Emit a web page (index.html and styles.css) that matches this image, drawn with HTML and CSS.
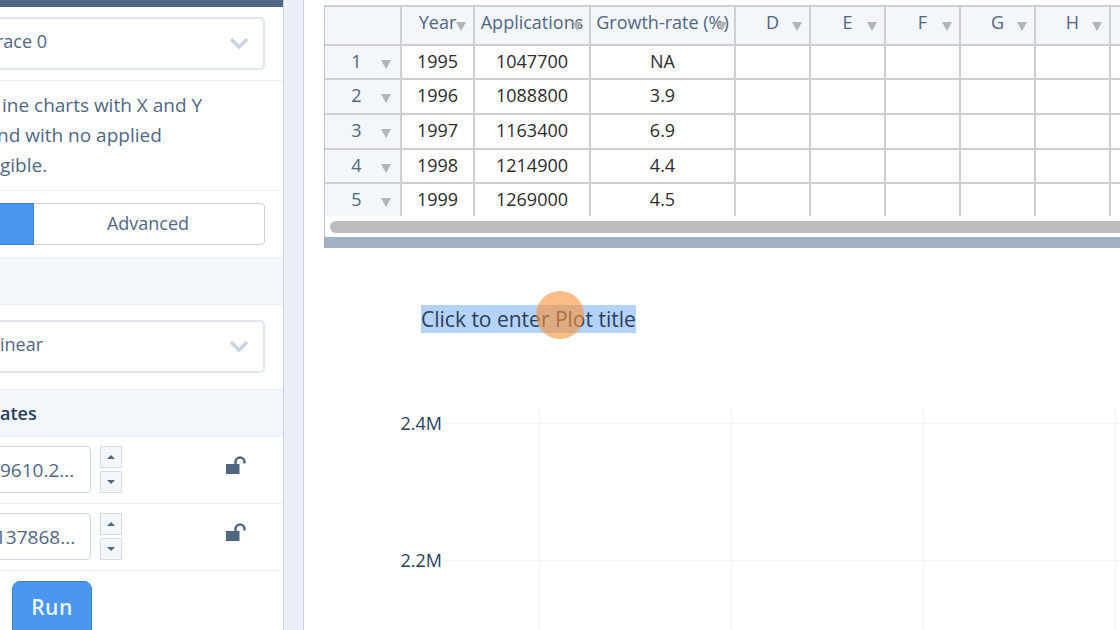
FILE: index.html
```html
<!DOCTYPE html>
<html lang="en">
<head>
  <meta charset="UTF-8" />
  <title>Chart Studio</title>
  <link rel="stylesheet" href="styles.css">
</head>
<body>
<div class="app">
  <aside class="sidebar">
    <div class="topbar"></div>

    <div class="section select-top">
      <div class="dropdown"><span class="dd-text">race 0</span> <svg class="chev" width="20" height="12" viewBox="0 0 20 12"><path d="M2 2l8 8 8-8" /></svg></div>
    </div>

    <div class="section note">
      <div class="note-first">ine charts with X and Y</div>
      <div class="note-second">nd with no applied</div>
      <div>gible.</div>
    </div>

    <div class="section toggle-wrap">
      <div class="toggle">
        <div class="toggle-on"></div>
        <div class="toggle-off">Advanced</div>
      </div>
    </div>

    <div class="band band-empty"></div>

    <div class="section select-mid">
      <div class="dropdown"><span class="dd-text">inear</span> <svg class="chev" width="20" height="12" viewBox="0 0 20 12"><path d="M2 2l8 8 8-8" /></svg></div>
    </div>

    <div class="band band-title">ates</div>

    <div class="coord-row">
      <div class="num-input">9610.2...</div>
      <div class="stepper">
        <div class="step"><i class="arrow-up"></i></div>
        <div class="step"><i class="arrow-down"></i></div>
      </div>
      <svg class="lock" width="21" height="19" viewBox="0 0 21 19"><path d="M0 8h13.500v10H0z" /><path class="shackle" d="M9.500 9V6a4.500 4.500 0 0 1 9 0v1.500" /></svg>
    </div>

    <div class="coord-row">
      <div class="num-input clip-one">137868...</div>
      <div class="stepper">
        <div class="step"><i class="arrow-up"></i></div>
        <div class="step"><i class="arrow-down"></i></div>
      </div>
      <svg class="lock" width="21" height="19" viewBox="0 0 21 19"><path d="M0 8h13.500v10H0z" /><path class="shackle" d="M9.500 9V6a4.500 4.500 0 0 1 9 0v1.500" /></svg>
    </div>

    <button class="run">Run</button>
  </aside>

  <div class="gutter"></div>

  <main class="main">
    <div class="grid-wrap">
      <table class="grid">
        <colgroup>
          <col class="c-idx"><col class="c-year"><col class="c-app"><col class="c-rate">
          <col class="c-x"><col class="c-x"><col class="c-x"><col class="c-x"><col class="c-x"><col class="c-x">
        </colgroup>
        <thead>
          <tr>
            <th></th>
            <th>Year<i class="sort"></i></th>
            <th>Applications<i class="sort"></i></th>
            <th>Growth-rate (%)<i class="sort"></i></th>
            <th>D<i class="sort"></i></th>
            <th>E<i class="sort"></i></th>
            <th>F<i class="sort"></i></th>
            <th>G<i class="sort"></i></th>
            <th>H<i class="sort"></i></th>
            <th></th>
          </tr>
        </thead>
        <tbody>
          <tr class="r1"><th>1<i class="sort"></i></th><td>1995</td><td>1047700</td><td>NA</td><td></td><td></td><td></td><td></td><td></td><td></td></tr>
          <tr class="r2"><th>2<i class="sort"></i></th><td>1996</td><td>1088800</td><td>3.9</td><td></td><td></td><td></td><td></td><td></td><td></td></tr>
          <tr class="r3"><th>3<i class="sort"></i></th><td>1997</td><td>1163400</td><td>6.9</td><td></td><td></td><td></td><td></td><td></td><td></td></tr>
          <tr class="r4"><th>4<i class="sort"></i></th><td>1998</td><td>1214900</td><td>4.4</td><td></td><td></td><td></td><td></td><td></td><td></td></tr>
          <tr class="r5"><th>5<i class="sort"></i></th><td>1999</td><td>1269000</td><td>4.5</td><td></td><td></td><td></td><td></td><td></td><td></td></tr>
        </tbody>
      </table>
      <div class="scroll-track"><div class="scroll-thumb"></div></div>
    </div>
    <div class="resize-bar"></div>

    <div class="plot">
      <div class="plot-title"><span>Click to enter Plot title</span></div>
      <svg class="axes" width="796" height="222" viewBox="0 0 796 222">
        <path d="M215.500 0V222M407.500 0V222M599.500 0V222M791.500 0V222" />
        <path d="M121 15.500H796M121 152.500H796" />
        <text x="118" y="22">2.4M</text>
        <text x="118" y="159">2.2M</text>
      </svg>
      <div class="cursor-dot"></div>
    </div>
  </main>
</div>
</body>
</html>
```

FILE: styles.css
```css
* {
  box-sizing: border-box;
}
html, body {
  margin: 0;
  height: 100%;
  overflow: hidden;
}
body {
  font-family: "Open Sans", sans-serif;
  font-size: 18px;
  color: #506784;
  background: #fff;
}
.app {
  display: flex;
  width: 1120px;
  height: 630px;
  overflow: hidden;
}

/* left panel */
.sidebar {
  width: 284px;
  flex: none;
  height: 630px;
  background: #fff;
  border-right: 1px solid #c8d4e3;
  overflow: hidden;
}
.topbar {
  height: 7px;
  background: #506784;
}
.section {
  border-bottom: 1px solid #ebf0f8;
}
.select-top {
  height: 74px;
  padding: 10px 18px 0 0;
}
.select-mid {
  height: 85px;
  padding: 15px 18px 0 0;
}
.dropdown {
  display: flex;
  align-items: center;
  justify-content: space-between;
  height: 53px;
  margin-left: -10px;
  padding: 0 14px 0 8px;
  border: 2px solid #dfe6f0;
  border-radius: 5px;
  color: #506784;
}
.dd-text {
  margin-bottom: 6px;
}
.select-top .dd-text {
  margin-left: -4px;
}
.chev {
  margin-bottom: 2px;
}
.chev path {
  fill: none;
  stroke: #c8d4e3;
  stroke-width: 3.500;
}
.note {
  height: 110px;
  padding-top: 9px;
  font-size: 19px;
  line-height: 30px;
  white-space: nowrap;
}
.note-first {
  margin-left: 2px;
}
.note-second {
  margin-left: -3px;
}
.toggle-wrap {
  height: 67px;
  padding: 12px 18px 0 0;
}
.toggle {
  display: flex;
  height: 42px;
  border: 1px solid #c8d4e3;
  border-left: 0;
  border-radius: 0 4px 4px 0;
}
.toggle-on {
  width: 34px;
  margin: -1px 0;
  background: #4a97f2;
  border: 1px solid #3a7fd0;
  border-left: 0;
}
.toggle-off {
  flex: 1;
  text-align: center;
  line-height: 38px;
  padding-right: 2px;
}
.band {
  background: #f3f6fa;
  border-bottom: 1px solid #ebf0f8;
}
.band-empty {
  height: 47px;
}
.band-title {
  height: 47px;
  font-weight: 600;
  color: #2a3f5f;
  line-height: 46px;
}
.coord-row {
  position: relative;
  display: flex;
  height: 67px;
  padding-top: 9px;
  border-bottom: 1px solid #ebf0f8;
}
.num-input {
  width: 91px;
  height: 47px;
  border: 1px solid #c8d4e3;
  border-left: 0;
  border-radius: 0 5px 5px 0;
  font-size: 19px;
  line-height: 47px;
  white-space: nowrap;
  overflow: hidden;
}
.clip-one {
  text-indent: -5px;
}
.stepper {
  display: flex;
  flex-direction: column;
  gap: 3px;
  margin-left: 9px;
}
.step {
  display: flex;
  align-items: center;
  justify-content: center;
  width: 22px;
  height: 22px;
  background: #f3f6fa;
  border: 1px solid #d5dce6;
}
.arrow-up, .arrow-down {
  width: 0;
  height: 0;
  border-left: 4px solid transparent;
  border-right: 4px solid transparent;
}
.arrow-up {
  border-bottom: 4px solid #506784;
}
.arrow-down {
  border-top: 4px solid #506784;
}
.lock {
  margin: 10px 0 0 104px;
}
.lock path {
  fill: #506784;
}
.lock .shackle {
  fill: none;
  stroke: #506784;
  stroke-width: 2.500;
}
.run {
  display: block;
  width: 80px;
  height: 58px;
  margin: 10px 0 0 12px;
  padding: 0 0 6px;
  font-family: "Open Sans", sans-serif;
  font-size: 21px;
  font-weight: 600;
  letter-spacing: 0.500px;
  color: #eef5ff;
  background: #4a97ef;
  border: 1px solid #3a7fd0;
  border-radius: 8px;
}

.gutter {
  width: 20px;
  flex: none;
  background: #ebf0f8;
  border-right: 1px solid #c8d4e3;
}

/* table + chart */
.main {
  flex: 1;
  min-width: 0;
  padding-top: 5px;
  overflow: hidden;
}
.grid-wrap {
  margin-left: 20px;
  height: 232px;
  border-left: 1px solid #c4c4c4;
  overflow: hidden;
}
.grid {
  table-layout: fixed;
  border-collapse: collapse;
  width: 820px;
  color: #2c2c2c;
}
.c-idx { width: 76px; }
.c-year { width: 73px; }
.c-app { width: 116px; }
.c-rate { width: 145px; }
.c-x { width: 75px; }
.grid th, .grid td {
  position: relative;
  padding: 0 0 3px;
  border: 2px solid #cfcfcf;
  border-left: 0;
  font-weight: 400;
  text-align: center;
  white-space: nowrap;
}
.grid td {
  background: #fff;
}
.grid th {
  background: #f3f6fa;
  color: #506784;
}
.grid thead tr {
  height: 39px;
}
.r1, .r4 {
  height: 34px;
}
.r2, .r3 {
  height: 35px;
}
.r5 {
  height: 33px;
}
.grid tbody tr:last-child td, .grid tbody tr:last-child th {
  border-bottom: 0;
}
.grid thead th {
  padding-bottom: 8px;
}
.grid tbody th {
  padding-right: 12px;
}
.sort {
  position: absolute;
  right: 7px;
  top: 15px;
  width: 0;
  height: 0;
  border-left: 5px solid transparent;
  border-right: 5px solid transparent;
  border-top: 9px solid #b4b4b4;
}
.grid tbody .sort {
  right: 9px;
  top: 14px;
}
.scroll-track {
  height: 17px;
  padding: 5px 0 0 5px;
}
.scroll-thumb {
  height: 12px;
  background: #bdbdbd;
  border-radius: 6px 0 0 6px;
}
.resize-bar {
  margin-left: 20px;
  height: 11px;
  background: #a2b1c6;
}
.plot {
  position: relative;
  height: 382px;
}
.plot-title {
  padding: 57px 0 0 117px;
  font-size: 21px;
  line-height: 29px;
  color: #2a3f5f;
}
.plot-title span {
  background: #b5d3f8;
}
.axes {
  display: block;
  margin: 74px 0 0 20px;
}
.axes path {
  fill: none;
  stroke: #eef1f5;
  stroke-width: 1;
}
.axes text {
  font-family: "Open Sans", sans-serif;
  font-size: 18px;
  fill: #2a3f5f;
  text-anchor: end;
}
.cursor-dot {
  position: absolute;
  left: 232px;
  top: 43px;
  width: 48px;
  height: 48px;
  border-radius: 50%;
  background: rgba(250, 145, 50, 0.6);
}
```
